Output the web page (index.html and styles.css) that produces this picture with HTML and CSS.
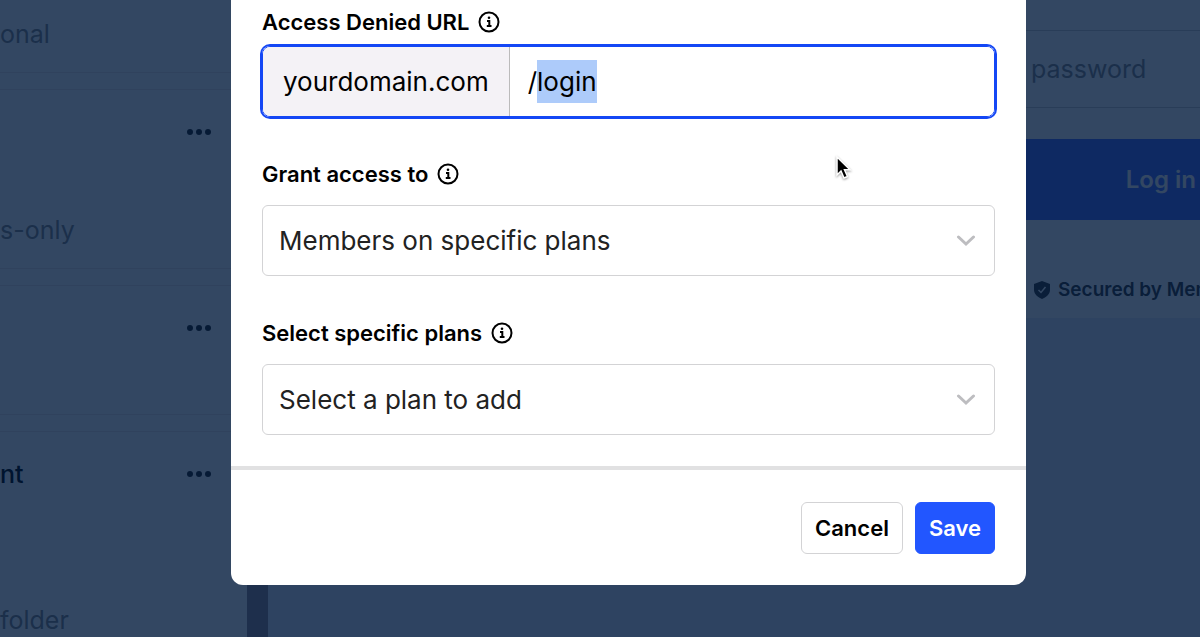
FILE: index.html
```html
<!DOCTYPE html>
<html lang="en">
<head>
    <meta charset="UTF-8">
    <meta name="viewport" content="width=device-width, initial-scale=1.0">
    <title>Gated Content</title>
    <link rel="stylesheet" href="styles.css">
</head>
<body>
    <div class="page">
        <aside class="sidebar">
            <section class="card card-first">
                <p class="muted">onal</p>
            </section>
            <section class="card card-tall">
                <div class="card-head">
                    <button class="more-btn" aria-label="More"><span></span><span></span><span></span></button>
                </div>
                <p class="muted">s-only</p>
            </section>
            <section class="card card-short">
                <div class="card-head">
                    <button class="more-btn" aria-label="More"><span></span><span></span><span></span></button>
                </div>
            </section>
            <section class="card card-last">
                <div class="card-head">
                    <h2>nt</h2>
                    <button class="more-btn" aria-label="More"><span></span><span></span><span></span></button>
                </div>
                <p class="muted">folder</p>
            </section>
        </aside>

        <main class="preview">
            <form class="login-form">
                <input class="password" type="text" placeholder="password" aria-label="password">
                <button class="login-btn" type="button">Log in</button>
                <p class="secured">
                    <svg width="16" height="18" viewBox="0 0 16 18" aria-hidden="true">
                        <path d="M8 0 L16 3 V9 C16 13 12 16.500 8 18 C4 16.500 0 13 0 9 V3 Z" fill="#333"/>
                        <path d="M4.500 9 L7 11.500 L11.500 6" fill="none" stroke="#fff" stroke-width="1.500"/>
                    </svg>
                    <span>Secured by Mem</span>
                </p>
            </form>
        </main>
    </div>

    <div class="overlay">
        <form class="modal">
            <div class="modal-body">
                <div class="field field-url">
                    <div class="field-label">
                        <label for="deniedUrl">Access Denied URL</label>
                        <svg class="info" viewBox="0 0 22 22" aria-hidden="true">
                            <circle cx="11" cy="11" r="9.500"/>
                            <path d="M9 10 H11.300 V15 M8.800 15 H13.500"/>
                            <circle class="dot" cx="11" cy="6.800" r="1.300"/>
                        </svg>
                    </div>
                    <div class="url-group">
                        <span class="domain">yourdomain.com</span>
                        <input id="deniedUrl" type="text" value="/login" spellcheck="false">
                    </div>
                </div>

                <div class="field">
                    <div class="field-label">
                        <label for="access">Grant access to</label>
                        <svg class="info" viewBox="0 0 22 22" aria-hidden="true">
                            <circle cx="11" cy="11" r="9.500"/>
                            <path d="M9 10 H11.300 V15 M8.800 15 H13.500"/>
                            <circle class="dot" cx="11" cy="6.800" r="1.300"/>
                        </svg>
                    </div>
                    <div class="select-box">
                        <select id="access">
                            <option>Members on specific plans</option>
                        </select>
                        <svg class="chevron" viewBox="0 0 20 12" aria-hidden="true"><path d="M2.500 2 L10 9 L17.500 2"/></svg>
                    </div>
                </div>

                <div class="field">
                    <div class="field-label">
                        <label for="plans">Select specific plans</label>
                        <svg class="info" viewBox="0 0 22 22" aria-hidden="true">
                            <circle cx="11" cy="11" r="9.500"/>
                            <path d="M9 10 H11.300 V15 M8.800 15 H13.500"/>
                            <circle class="dot" cx="11" cy="6.800" r="1.300"/>
                        </svg>
                    </div>
                    <div class="select-box">
                        <select id="plans">
                            <option>Select a plan to add</option>
                        </select>
                        <svg class="chevron" viewBox="0 0 20 12" aria-hidden="true"><path d="M2.500 2 L10 9 L17.500 2"/></svg>
                    </div>
                </div>
            </div>

            <div class="modal-footer">
                <button class="btn btn-cancel" type="button">Cancel</button>
                <button class="btn btn-save" type="button">Save</button>
            </div>
        </form>
    </div>

    <svg class="cursor" width="18" height="26" viewBox="0 0 18 26" aria-hidden="true">
        <path d="M2 2 V20 L6 16 L9 23 L12.500 21.500 L9.500 14.800 H15 Z" fill="#000" stroke="#fff" stroke-width="1.500"/>
    </svg>

    <script>
        // Select the slug so it can be typed over straight away
        const deniedUrl = document.getElementById('deniedUrl');
        deniedUrl.focus();
        deniedUrl.setSelectionRange(1, deniedUrl.value.length);
    </script>
</body>
</html>
```

FILE: styles.css
```css
* {
    box-sizing: border-box;
}

body {
    margin: 0;
    height: 100vh;
    overflow: hidden;
    font-family: Inter, "Liberation Sans", sans-serif;
    color: #000;
}

h2, p {
    margin: 0;
}

button, input, select {
    font-family: inherit;
    color: inherit;
}

/* Page behind the dialog */
.page {
    display: flex;
    height: 100%;
    background-color: #e6e8fb;
}

.sidebar {
    display: flex;
    flex-direction: column;
    gap: 16px;
    width: 268px;
    border-right: 21px solid #96878f;
    background-color: #fff;
}

.card {
    display: flex;
    flex-direction: column;
    flex-shrink: 0;
    border: solid #f0e4e4;
    border-width: 1px 0;
    padding: 26px 36px 22px 0;
}

.card-first {
    height: 73px;
    padding-top: 18px;
    border-top: none;
}

.card-tall {
    height: 180px;
    justify-content: space-between;
}

.card-short {
    height: 130px;
}

.card-last {
    height: 230px;
    gap: 114px;
}

.card-head {
    display: flex;
    align-items: center;
    justify-content: space-between;
    height: 32px;
}

.card h2 {
    font-size: 25px;
    font-weight: 500;
}

.muted {
    font-size: 25px;
    line-height: 32px;
    color: #888;
}

.more-btn {
    display: flex;
    gap: 3px;
    margin-left: auto;
    padding: 0;
    border: none;
    background: none;
}

.more-btn span {
    width: 6px;
    height: 6px;
    border-radius: 50%;
    background-color: #222;
}

.preview {
    flex: 1;
    display: flex;
    justify-content: flex-end;
    align-items: flex-start;
    overflow: hidden;
}

.login-form {
    flex: 0 0 174px;
    min-width: 0;
    padding-top: 30px;
    height: 318px;
    background-color: #fff;
    overflow: hidden;
}

.password {
    display: block;
    width: 100%;
    height: 78px;
    padding: 0 5px;
    border: solid #ccc;
    border-width: 1px 0;
    font-size: 25px;
    background: none;
}

.password::placeholder {
    color: #888;
}

.login-btn {
    display: block;
    width: 100%;
    height: 81px;
    margin-top: 31px;
    padding: 0 4px;
    border: none;
    background-color: #4669ff;
    color: #fff;
    font-size: 24px;
    font-weight: 600;
    text-align: right;
}

.secured {
    display: flex;
    align-items: center;
    gap: 8px;
    margin-top: 58px;
    padding-left: 8px;
    font-size: 19px;
    line-height: 24px;
    font-weight: 600;
    color: #333;
    white-space: nowrap;
}

.secured svg {
    flex-shrink: 0;
}

/* Dialog */
.overlay {
    position: fixed;
    inset: 0;
    padding: 0 174px 0 231px;
    background-color: rgba(0, 25, 59, 0.8);
}

.modal {
    border-radius: 0 0 12px 12px;
    background-color: #fff;
}

.modal-body {
    display: flex;
    flex-direction: column;
    gap: 41px;
    padding: 6px 31px 31px;
}

.field {
    display: flex;
    flex-direction: column;
    gap: 15px;
}

.field-url {
    gap: 8px;
}

.field-label {
    display: flex;
    align-items: center;
    gap: 9px;
    font-size: 22px;
    line-height: 32px;
    font-weight: 600;
}

.info {
    width: 22px;
    height: 22px;
    fill: none;
    stroke: #000;
    stroke-width: 2;
}

.info .dot {
    fill: #000;
    stroke: none;
}

.url-group {
    display: flex;
    height: 71px;
    border: 1px solid #1447f5;
    border-radius: 8px;
    box-shadow: 0 0 0 2px #1447f5;
    font-size: 26px;
    overflow: hidden;
}

.domain {
    display: flex;
    align-items: center;
    padding: 0 20px;
    border-right: 1px solid #bbb;
    background-color: #f4f2f6;
}

.url-group input {
    flex: 1;
    min-width: 0;
    padding: 0 18px;
    border: none;
    outline: none;
    font-size: 26px;
    line-height: 43px;
}

.url-group input::selection {
    background-color: #adcbfa;
    color: #000;
}

.select-box {
    display: grid;
    align-items: center;
}

.select-box select,
.select-box .chevron {
    grid-area: 1 / 1;
}

.select-box select {
    width: 100%;
    height: 71px;
    padding: 0 48px 0 16px;
    border: 1px solid #d3d3d5;
    border-radius: 6px;
    background-color: #fff;
    color: #222;
    font-size: 26px;
    appearance: none;
}

.chevron {
    justify-self: end;
    width: 20px;
    height: 12px;
    margin-right: 19px;
    fill: none;
    stroke: #bdbdc0;
    stroke-width: 3;
    stroke-linecap: round;
    pointer-events: none;
}

.modal-footer {
    display: flex;
    justify-content: flex-end;
    gap: 12px;
    padding: 32px 31px 31px;
    border-top: 4px solid #e1e1e2;
}

.btn {
    height: 52px;
    padding: 0 13px;
    border: 1px solid #d3d3d5;
    border-radius: 6px;
    font-size: 22px;
    font-weight: 600;
    cursor: pointer;
}

.btn-cancel {
    background-color: #fff;
}

.btn-save {
    border-color: #2256ff;
    background-color: #2256ff;
    color: #fff;
}

/* Mouse pointer over the dialog */
.cursor {
    position: fixed;
    left: 835px;
    top: 155px;
    filter: drop-shadow(0 1px 1px rgba(0, 0, 0, 0.4));
    pointer-events: none;
}
```
